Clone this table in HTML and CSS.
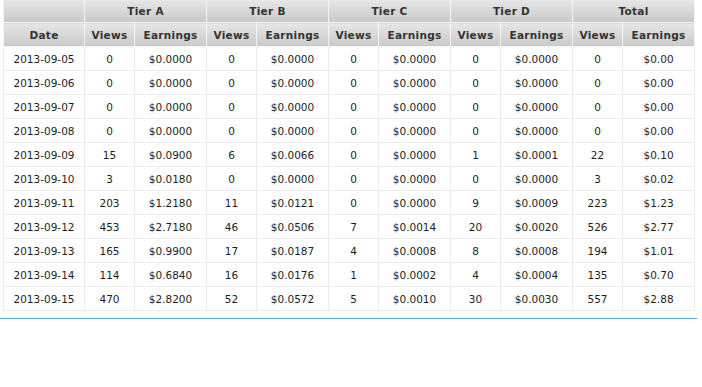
FILE: index.html
```html
<!DOCTYPE html>
<html>
<head>
<meta charset="utf-8">
<link rel="stylesheet" href="styles.css">
</head>
<body>
<div class="wrap">
<table class="stats">
<colgroup>
<col class="c-date"><col class="c-v"><col class="c-e"><col class="c-v"><col class="c-e"><col class="c-v"><col class="c-e"><col class="c-v"><col class="c-e"><col class="c-v"><col class="c-e">
</colgroup>
<thead>
<tr class="h1"><th></th><th colspan="2">Tier A</th><th colspan="2">Tier B</th><th colspan="2">Tier C</th><th colspan="2">Tier D</th><th colspan="2">Total</th></tr>
<tr class="h2"><th>Date</th><th>Views</th><th>Earnings</th><th>Views</th><th>Earnings</th><th>Views</th><th>Earnings</th><th>Views</th><th>Earnings</th><th>Views</th><th>Earnings</th></tr>
</thead>
<tbody>
<tr><td>2013-09-05</td><td>0</td><td>$0.0000</td><td>0</td><td>$0.0000</td><td>0</td><td>$0.0000</td><td>0</td><td>$0.0000</td><td>0</td><td>$0.00</td></tr>
<tr><td>2013-09-06</td><td>0</td><td>$0.0000</td><td>0</td><td>$0.0000</td><td>0</td><td>$0.0000</td><td>0</td><td>$0.0000</td><td>0</td><td>$0.00</td></tr>
<tr><td>2013-09-07</td><td>0</td><td>$0.0000</td><td>0</td><td>$0.0000</td><td>0</td><td>$0.0000</td><td>0</td><td>$0.0000</td><td>0</td><td>$0.00</td></tr>
<tr><td>2013-09-08</td><td>0</td><td>$0.0000</td><td>0</td><td>$0.0000</td><td>0</td><td>$0.0000</td><td>0</td><td>$0.0000</td><td>0</td><td>$0.00</td></tr>
<tr><td>2013-09-09</td><td>15</td><td>$0.0900</td><td>6</td><td>$0.0066</td><td>0</td><td>$0.0000</td><td>1</td><td>$0.0001</td><td>22</td><td>$0.10</td></tr>
<tr><td>2013-09-10</td><td>3</td><td>$0.0180</td><td>0</td><td>$0.0000</td><td>0</td><td>$0.0000</td><td>0</td><td>$0.0000</td><td>3</td><td>$0.02</td></tr>
<tr><td>2013-09-11</td><td>203</td><td>$1.2180</td><td>11</td><td>$0.0121</td><td>0</td><td>$0.0000</td><td>9</td><td>$0.0009</td><td>223</td><td>$1.23</td></tr>
<tr><td>2013-09-12</td><td>453</td><td>$2.7180</td><td>46</td><td>$0.0506</td><td>7</td><td>$0.0014</td><td>20</td><td>$0.0020</td><td>526</td><td>$2.77</td></tr>
<tr><td>2013-09-13</td><td>165</td><td>$0.9900</td><td>17</td><td>$0.0187</td><td>4</td><td>$0.0008</td><td>8</td><td>$0.0008</td><td>194</td><td>$1.01</td></tr>
<tr><td>2013-09-14</td><td>114</td><td>$0.6840</td><td>16</td><td>$0.0176</td><td>1</td><td>$0.0002</td><td>4</td><td>$0.0004</td><td>135</td><td>$0.70</td></tr>
<tr><td>2013-09-15</td><td>470</td><td>$2.8200</td><td>52</td><td>$0.0572</td><td>5</td><td>$0.0010</td><td>30</td><td>$0.0030</td><td>557</td><td>$2.88</td></tr>
</tbody>
</table>
<div class="rule"></div>
</div>
</body>
</html>
```
FILE: styles.css
```css
html, body {
  margin: 0;
  padding: 0;
  background: #fff;
}
.wrap {
  width: 697px;
}
.stats {
  margin-left: 3px;
  width: 691px;
  border-collapse: collapse;
  table-layout: fixed;
  font-family: "DejaVu Sans", Verdana, sans-serif;
  font-size: 10.5px;
  color: #1e1e1e;
}
.c-date { width: 81px; }
.c-v { width: 50px; }
.c-e { width: 72px; }
.stats th {
  font-weight: bold;
  color: #333;
  background: linear-gradient(#e6e6e6, #c9c9c9);
  border: 1px solid #f4f4f4;
  border-top: none;
  padding: 0;
  text-align: center;
  letter-spacing: 0.3px;
}
.h1 th { height: 22px; }
.h2 th { height: 23px; }
.stats td {
  height: 23px;
  padding: 0;
  text-align: center;
  border: 1px solid #ebebeb;
}
.rule {
  margin-top: 7px;
  height: 1px;
  background: #55b3d1;
}
```
